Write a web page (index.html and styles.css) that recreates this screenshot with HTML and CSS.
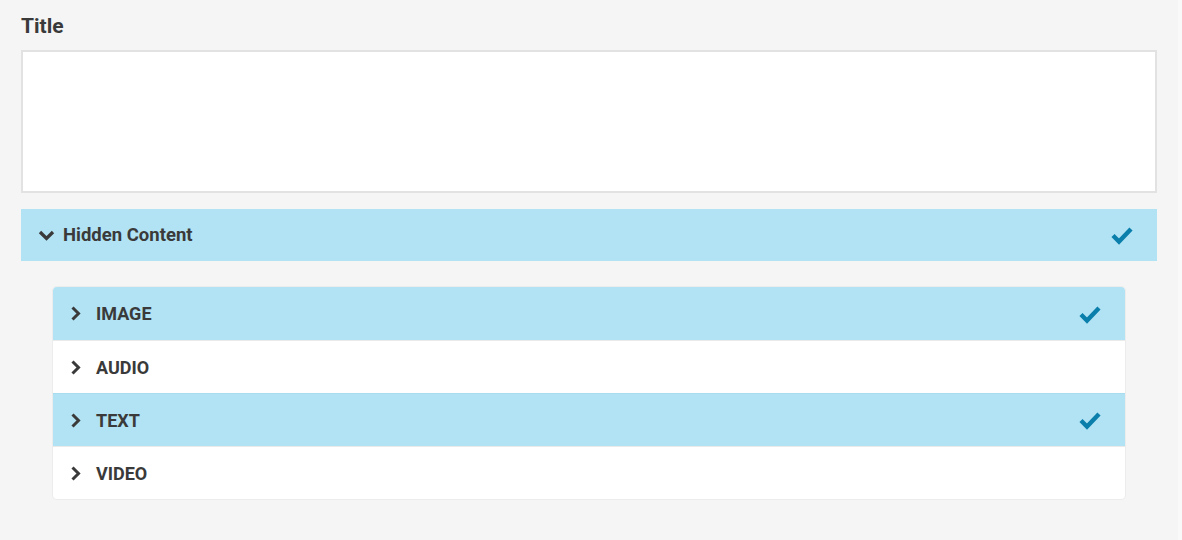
FILE: index.html
```html
<!DOCTYPE html>
<html>
<head>
<meta charset="utf-8">
<link rel="stylesheet" href="styles.css">
</head>
<body>
<div class="page">
  <div class="label">Title</div>
  <div class="textarea"></div>
  <div class="bar">
    <svg class="chev-down" width="17" height="12" viewBox="0 0 17 12"><polyline points="2,3 8.5,9.5 15,3" fill="none" stroke="#3a3a3a" stroke-width="3.3"/></svg>
    <span class="bar-text">Hidden Content</span>
    <svg class="check" width="22" height="19" viewBox="0 0 22 19"><polyline points="2,9.5 8,15.5 20,3" fill="none" stroke="#0b7fab" stroke-width="4.4"/></svg>
  </div>
  <div class="card">
    <div class="row on">
      <svg class="chev-right" width="11" height="15" viewBox="0 0 11 15"><polyline points="2.5,1.5 8.5,7.5 2.5,13.5" fill="none" stroke="#3a3a3a" stroke-width="3"/></svg>
      <span class="row-text">IMAGE</span>
      <svg class="check" width="22" height="19" viewBox="0 0 22 19"><polyline points="2,9.5 8,15.5 20,3" fill="none" stroke="#0b7fab" stroke-width="4.4"/></svg>
    </div>
    <div class="row">
      <svg class="chev-right" width="11" height="15" viewBox="0 0 11 15"><polyline points="2.5,1.5 8.5,7.5 2.5,13.5" fill="none" stroke="#3a3a3a" stroke-width="3"/></svg>
      <span class="row-text">AUDIO</span>
    </div>
    <div class="row on">
      <svg class="chev-right" width="11" height="15" viewBox="0 0 11 15"><polyline points="2.5,1.5 8.5,7.5 2.5,13.5" fill="none" stroke="#3a3a3a" stroke-width="3"/></svg>
      <span class="row-text">TEXT</span>
      <svg class="check" width="22" height="19" viewBox="0 0 22 19"><polyline points="2,9.5 8,15.5 20,3" fill="none" stroke="#0b7fab" stroke-width="4.4"/></svg>
    </div>
    <div class="row">
      <svg class="chev-right" width="11" height="15" viewBox="0 0 11 15"><polyline points="2.5,1.5 8.5,7.5 2.5,13.5" fill="none" stroke="#3a3a3a" stroke-width="3"/></svg>
      <span class="row-text">VIDEO</span>
    </div>
  </div>
</div>
</body>
</html>
```
FILE: styles.css
```css
html {
  background: #f9f9f9;
}
body {
  margin: 0;
  font-family: Roboto, "Liberation Sans", sans-serif;
  color: #3a3a3a;
}
.page {
  width: 1178px;
  height: 540px;
  box-sizing: border-box;
  background: #f5f5f5;
  padding: 14px 21px 0 21px;
}
.label {
  font-size: 21px;
  font-weight: 700;
  line-height: 24px;
  margin-bottom: 12px;
}
.textarea {
  width: 1136px;
  height: 143px;
  box-sizing: border-box;
  background: #fff;
  border: 2px solid #e2e2e2;
}
.bar {
  margin-top: 16px;
  width: 1136px;
  height: 52px;
  background: #b1e3f4;
  display: flex;
  align-items: center;
  padding: 0 24px 0 18px;
  box-sizing: border-box;
}
.chev-down {
  margin-left: -1px;
  margin-right: 8px;
}
.bar-text {
  font-size: 18.5px;
  font-weight: 700;
  flex: 1;
}
.check {
  margin-top: 1px;
}
.card {
  margin-top: 26px;
  margin-left: 32px;
  width: 1072px;
  background: #fff;
  border-radius: 4px;
  overflow: hidden;
  box-shadow: 0 0 0 1px #ececec;
}
.row {
  height: 53px;
  box-sizing: border-box;
  display: flex;
  align-items: center;
  padding: 0 24px 0 17px;
  border-top: 1px solid #eaeaea;
}
.row:first-child {
  border-top: none;
}
.row.on {
  background: #b1e3f4;
  border-top-color: #a8dcee;
}
.chev-right {
  margin-right: 15px;
}
.row-text {
  font-size: 18px;
  font-weight: 700;
  flex: 1;
}
```
